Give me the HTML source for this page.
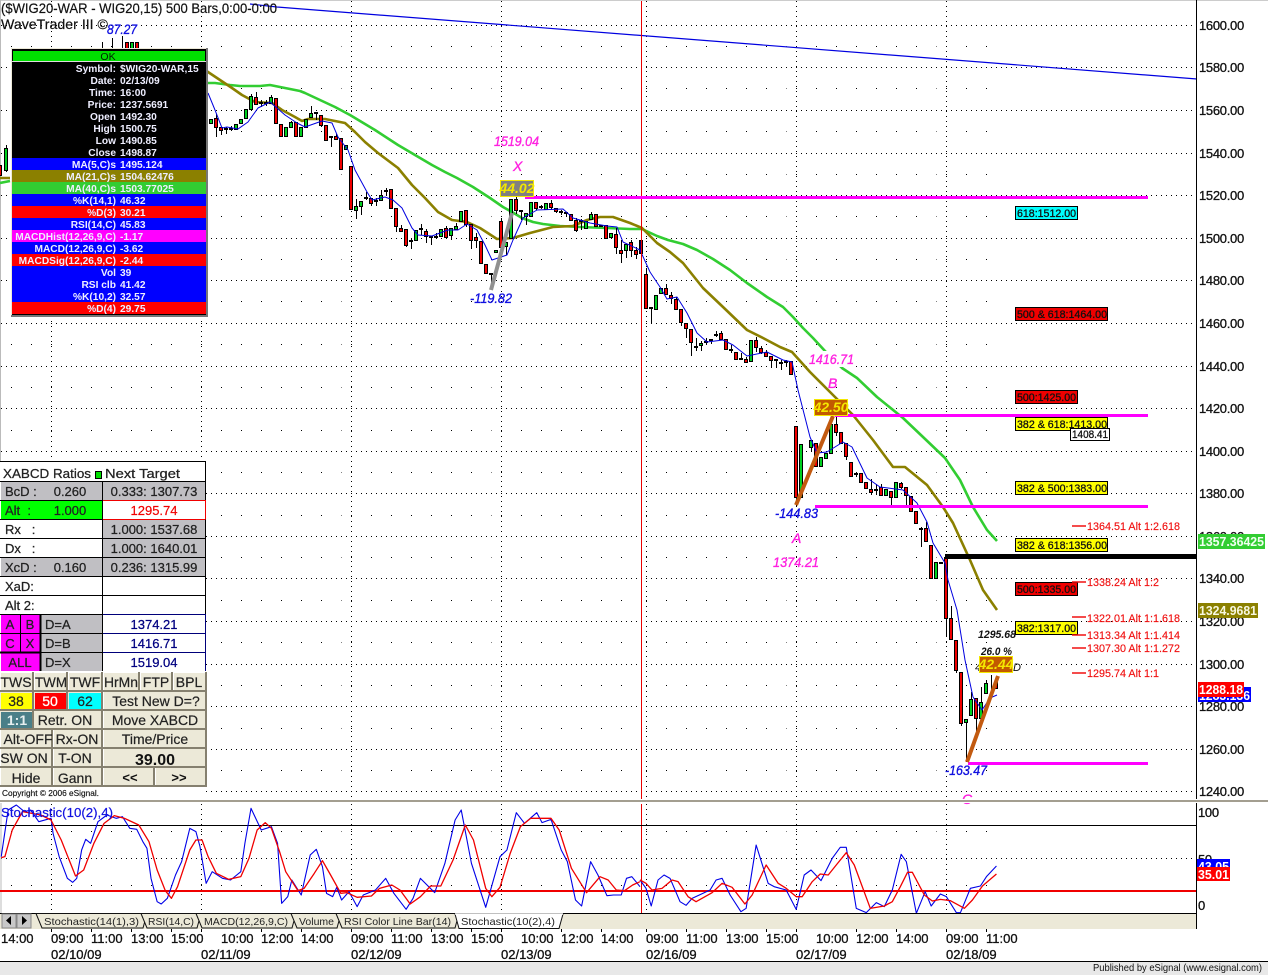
<!DOCTYPE html>
<html><head><meta charset="utf-8"><title>WIG20 WaveTrader chart</title>
<style>
html,body{margin:0;padding:0;background:#fff;width:1268px;height:975px;overflow:hidden}
svg{display:block;font-family:"Liberation Sans",sans-serif}
text{white-space:pre}
.ax{font-size:13px;letter-spacing:-.3px;fill:#111;stroke:#111;stroke-width:.3}
.tm{font-size:13px;fill:#111;stroke:#111;stroke-width:.3}
.dw{font-size:10.2px;font-weight:bold;fill:#eef}
.e{text-anchor:end}
.p{font-size:13px;fill:#222;stroke:#222;stroke-width:.25}
.b{font-size:14px;fill:#222;stroke:#222;stroke-width:.2;text-anchor:middle}
.c{text-anchor:middle}
.it{font-size:14px;font-style:italic;stroke-width:.35}
.mg{fill:#ff20e0;stroke:#ff20e0}
.bl{fill:#1010e0;stroke:#1010e0}
.box{font-size:11px;fill:#111;stroke:#111;stroke-width:.3}
.alt{font-size:11px;fill:#f01010;stroke:#f01010;stroke-width:.15}
.tab{font-size:10.5px;fill:#222}
</style></head><body>
<svg width="1268" height="975" viewBox="0 0 1268 975" xmlns="http://www.w3.org/2000/svg">
<defs><path id="sp" d="M11 0H191M201 0H341.5M351 0H491.5M501 0H641.5M646 0H786.5M796 0H936.5M946 0H994"/></defs>
<rect width="1268" height="975" fill="#fff"/>
<rect y="0" width="1268" height="1" fill="#ccc"/>
<rect x="0" y="0" width="1" height="800" fill="#bbb"/>

<!-- grid -->
<g stroke="#000" stroke-width="1" fill="none" shape-rendering="crispEdges" stroke-dasharray="1 4">
<path d="M1 25.5H1196M1 67.5H1196M1 110.5H1196M1 153.5H1196M1 195.5H1196M1 238.5H1196M1 280.5H1196M1 323.5H1196M1 366.5H1196M1 408.5H1196M1 451.5H1196M1 493.5H1196M1 536.5H1196M1 578.5H1196M1 621.5H1196M1 664.5H1196M1 706.5H1196M1 749.5H1196M1 791.5H1196M1 858.5H1196"/>
<path d="M51.5 1V800M201.5 1V800M351.5 1V800M501.5 1V800M646.5 1V800M796.5 1V800M946.5 1V800M51.5 804V913M201.5 804V913M351.5 804V913M501.5 804V913M646.5 804V913M796.5 804V913M946.5 804V913"/>
</g>
<g stroke="#000" stroke-width="1" fill="none" shape-rendering="crispEdges" stroke-dasharray="1 19">
<use href="#sp" y="46.5"/><use href="#sp" y="88.5"/><use href="#sp" y="131.5"/><use href="#sp" y="174.5"/><use href="#sp" y="216.5"/><use href="#sp" y="259.5"/><use href="#sp" y="301.5"/><use href="#sp" y="344.5"/><use href="#sp" y="387.5"/><use href="#sp" y="430.5"/><use href="#sp" y="472.5"/><use href="#sp" y="515.5"/><use href="#sp" y="557.5"/><use href="#sp" y="600.5"/><use href="#sp" y="642.5"/><use href="#sp" y="685.5"/><use href="#sp" y="728.5"/><use href="#sp" y="770.5"/><use href="#sp" y="831.5"/><use href="#sp" y="885.5"/>
</g>

<!-- trend line -->
<path d="M250 4L277 7L1197 79" stroke="#0000e0" stroke-width="1.2" fill="none"/>

<!-- moving averages -->
<g fill="none" stroke-linejoin="round">
<path stroke="#32cd32" stroke-width="2.6" d="M208 83L215 83L230 85L240 86L260 86L270 85L285 88L300 91L305 93L320 100L335 107L350 115L375 130L398 145L415 155L432 165L445 172L457 178L473 187L490 198L503 207L512 212L522 218L533 222L543 224L560 226L580 227L607 228L630 229L642 229L657 236L668 240L683 244L697 250L713 259L730 270L747 283L767 297L783 307L793 317L803 328L813 338L825 351L842 368L857 378L877 397L903 418L923 437L945 458L960 480L973 507L987 530L997 541M0 183L10 181"/>
<path stroke="#8b8000" stroke-width="2.6" d="M205 70L220 80L232 88L242 95L255 102L272 103L282 110L295 117L302 121L308 119L325 119L335 121L345 123L355 132L365 142L378 153L398 168L412 185L425 198L438 212L452 220L467 222L480 228L497 239L513 238L530 233L553 227L573 226L587 220L600 217L613 217L630 223L642 228L657 243L670 252L683 263L703 288L723 307L747 330L763 338L780 347L792 352L810 372L830 392L853 415L873 440L893 467L905 467L927 485L943 507L953 523L970 560L983 590L997 610M0 178L10 178"/>
</g>

<!-- candles -->
<g stroke="#000" stroke-width="1" fill="none" shape-rendering="crispEdges">
<path d="M6.5 145V172M102.5 42V48M112.5 38V48M122.5 36V48M216.5 114V137M221.5 127V135M226.5 127V134M231.5 126V131M251.5 94V110M256.5 92V105M261.5 100V107M266.5 100V106M271.5 95V103M286.5 127V137M291.5 121V127M311.5 106V117M316.5 113V120M321.5 115V127M331.5 137V147M336.5 134V140M356.5 199V219M361.5 201V215M366.5 192V200M371.5 198V206M376.5 198V206M381.5 190V200M386.5 188V196M396.5 208V232M401.5 225V231M406.5 229V247M411.5 238V249M421.5 224V235M426.5 229V243M431.5 237V245M436.5 233V238M446.5 226V237M451.5 228V240M456.5 223V229M466.5 210V227M471.5 224V249M476.5 233V248M491.5 274V290M501.5 218V252M506.5 242V255M516.5 197V214M521.5 210V220M526.5 213V225M536.5 202V210M541.5 205V209M551.5 200V210M556.5 208V213M561.5 210V215M566.5 213V217M576.5 218V232M581.5 219V230M591.5 212V219M616.5 228V254M621.5 240V263M626.5 244V258M631.5 240V257M636.5 247V259M646.5 268V308M651.5 308V323M666.5 284V294M671.5 292V304M676.5 297V309M681.5 309V326M686.5 323V338M691.5 329V356M696.5 338V351M701.5 341V351M706.5 338V344M711.5 339V344M716.5 331V337M721.5 331V339M731.5 345V353M741.5 353V360M746.5 357V363M756.5 337V352M761.5 346V354M766.5 350V357M771.5 356V368M776.5 360V368M781.5 360V370M786.5 360V367M796.5 426V506M811.5 440V452M836.5 415V436M846.5 443V460M856.5 472V477M871.5 479V495M876.5 484V495M881.5 484V495M891.5 491V508M901.5 482V489M906.5 487V506M921.5 527V547M926.5 522V541M946.5 557V637M951.5 606V640M956.5 640V673M961.5 672V726M966.5 719V762M971.5 692V715M976.5 698V732M981.5 687V718M986.5 680V693M991.5 675V690M996.5 678V688"/>
<path stroke-width="2" d="M224 129h4M229 129h4M259 103h4M264 103h4M314 113h4M329 137h4M364 198h4M374 201h4M384 191h4M409 241h4M419 229h4M429 237h4M434 237h4M489 274h4M519 211h4M539 207h4M559 212h4M564 213h4M579 221h4M599 226h4M649 308h4M694 347h4M704 342h4M709 340h4M714 335h4M729 350h4M739 359h4M774 360h4M779 363h4M784 362h4M854 474h4M874 490h4M919 529h4M939 563h4"/>
<path fill="#00d020" d="M4.5 148.5h3v22h-3zM209.5 119.5h3v4h-3zM234.5 124.5h3v5h-3zM239.5 119.5h3v4h-3zM244.5 109.5h3v9h-3zM249.5 96.5h3v13h-3zM269.5 97.5h3v6h-3zM284.5 127.5h3v9h-3zM289.5 122.5h3v5h-3zM299.5 127.5h3v9h-3zM304.5 119.5h3v8h-3zM309.5 113.5h3v4h-3zM344.5 145.5h3v4h-3zM354.5 206.5h3v4h-3zM359.5 201.5h3v5h-3zM379.5 195.5h3v5h-3zM414.5 230.5h3v10h-3zM439.5 229.5h3v7h-3zM449.5 228.5h3v7h-3zM454.5 226.5h3v3h-3zM459.5 211.5h3v10h-3zM494.5 250.5h3v2h-3zM504.5 242.5h3v4h-3zM509.5 199.5h3v39h-3zM524.5 213.5h3v3h-3zM529.5 202.5h3v14h-3zM544.5 203.5h3v6h-3zM584.5 221.5h3v7h-3zM589.5 214.5h3v5h-3zM609.5 233.5h3v4h-3zM624.5 244.5h3v6h-3zM654.5 295.5h3v14h-3zM659.5 288.5h3v5h-3zM699.5 343.5h3v2h-3zM749.5 340.5h3v21h-3zM799.5 444.5h3v53h-3zM809.5 440.5h3v7h-3zM819.5 457.5h3v9h-3zM824.5 453.5h3v5h-3zM829.5 424.5h3v29h-3zM884.5 489.5h3v6h-3zM894.5 482.5h3v15h-3zM934.5 562.5h3v16h-3zM964.5 719.5h3v3h-3zM969.5 699.5h3v16h-3zM979.5 702.5h3v16h-3zM984.5 683.5h3v10h-3zM130.5 42.5h3v6h-3z"/>
<path fill="#f00000" d="M-1.5 165.5h3v10h-3zM125.5 42.5h3v6h-3zM135.5 42.5h3v6h-3zM214.5 118.5h3v9h-3zM219.5 127.5h3v3h-3zM254.5 97.5h3v7h-3zM274.5 98.5h3v25h-3zM279.5 124.5h3v12h-3zM294.5 122.5h3v14h-3zM319.5 115.5h3v10h-3zM324.5 125.5h3v15h-3zM334.5 136.5h3v3h-3zM339.5 138.5h3v31h-3zM349.5 166.5h3v43h-3zM369.5 198.5h3v5h-3zM389.5 189.5h3v19h-3zM394.5 208.5h3v18h-3zM399.5 228.5h3v3h-3zM404.5 229.5h3v16h-3zM424.5 231.5h3v5h-3zM444.5 228.5h3v9h-3zM464.5 210.5h3v14h-3zM469.5 224.5h3v16h-3zM474.5 237.5h3v3h-3zM479.5 241.5h3v22h-3zM484.5 264.5h3v9h-3zM499.5 221.5h3v26h-3zM514.5 199.5h3v11h-3zM534.5 202.5h3v6h-3zM549.5 203.5h3v4h-3zM554.5 208.5h3v3h-3zM569.5 214.5h3v6h-3zM574.5 220.5h3v10h-3zM594.5 214.5h3v12h-3zM604.5 225.5h3v13h-3zM614.5 234.5h3v13h-3zM619.5 250.5h3v3h-3zM629.5 242.5h3v8h-3zM634.5 250.5h3v4h-3zM644.5 274.5h3v34h-3zM664.5 288.5h3v6h-3zM669.5 295.5h3v3h-3zM674.5 299.5h3v10h-3zM679.5 309.5h3v13h-3zM684.5 323.5h3v5h-3zM689.5 329.5h3v13h-3zM719.5 333.5h3v6h-3zM724.5 339.5h3v10h-3zM734.5 352.5h3v7h-3zM744.5 359.5h3v3h-3zM754.5 340.5h3v7h-3zM759.5 348.5h3v4h-3zM764.5 352.5h3v4h-3zM769.5 356.5h3v4h-3zM789.5 361.5h3v13h-3zM794.5 426.5h3v71h-3zM814.5 443.5h3v23h-3zM834.5 424.5h3v8h-3zM839.5 432.5h3v11h-3zM844.5 443.5h3v13h-3zM849.5 462.5h3v14h-3zM859.5 473.5h3v9h-3zM864.5 482.5h3v6h-3zM869.5 489.5h3v3h-3zM879.5 487.5h3v8h-3zM889.5 491.5h3v6h-3zM899.5 483.5h3v4h-3zM904.5 487.5h3v8h-3zM909.5 496.5h3v15h-3zM914.5 511.5h3v12h-3zM924.5 528.5h3v13h-3zM929.5 545.5h3v33h-3zM944.5 557.5h3v61h-3zM949.5 618.5h3v21h-3zM954.5 640.5h3v30h-3zM959.5 672.5h3v51h-3zM974.5 698.5h3v20h-3zM994.5 682.5h3v6h-3z"/>
<path fill="#000060" d="M639.5 240.5h3v13h-3z"/>
</g>

<!-- MA5 blue -->
<path fill="none" stroke="#0000e0" stroke-width="1" stroke-linejoin="round" d="M208 93L215 110L222 128L227 127L238 129L248 122L258 108L270 102L277 108L285 115L297 123L305 127L322 121L332 123L338 137L348 150L355 170L367 192L372 200L385 197L393 200L402 208L412 228L418 235L432 236L448 230L458 230L467 224L477 230L485 245L492 260L507 255L513 240L523 218L537 210L563 209L573 218L590 223L607 226L617 227L623 242L640 250L650 272L660 287L667 299L677 297L687 313L697 333L707 342L723 340L733 345L747 356L767 352L783 360L792 362L798 390L810 437L817 453L827 452L843 442L852 447L867 478L880 487L903 490L917 503L927 522L933 543L945 563L948 580L957 610L965 660L973 697L982 710L990 698L997 695"/>

<!-- crosshair -->
<path d="M641.5 1V800M641.5 804V913" stroke="#e80000" stroke-width="1" fill="none" shape-rendering="crispEdges"/>

<!-- magenta lines -->
<g fill="#ff00ff" shape-rendering="crispEdges">
<rect x="525" y="196" width="623" height="3"/>
<rect x="835" y="414" width="313" height="3"/>
<rect x="815" y="505" width="333" height="3"/>
<rect x="968" y="762" width="180" height="3"/>
</g>
<rect x="945" y="554" width="252" height="5" fill="#000" shape-rendering="crispEdges"/>

<!-- pattern legs -->
<path d="M491 290L512 213" stroke="#909090" stroke-width="4" fill="none"/>
<path d="M796 505L833 416M967 762L998 676" stroke="#c25a10" stroke-width="4" fill="none"/>

<!-- chart labels -->
<rect x="808" y="351" width="48" height="16" fill="#fff"/>
<text class="it bl" x="107" y="34" textLength="30" lengthAdjust="spacingAndGlyphs">87.27</text>
<text class="it mg" x="494" y="146" textLength="45" lengthAdjust="spacingAndGlyphs">1519.04</text>
<text class="it mg" x="513" y="171">X</text>
<text class="it bl" x="470" y="303" textLength="42" lengthAdjust="spacingAndGlyphs">-119.82</text>
<text class="it mg" x="809" y="364" textLength="45" lengthAdjust="spacingAndGlyphs">1416.71</text>
<text class="it mg" x="828" y="388">B</text>
<text class="it bl" x="775" y="518" textLength="43" lengthAdjust="spacingAndGlyphs">-144.83</text>
<text class="it mg" x="792" y="543">A</text>
<text class="it mg" x="773" y="567" textLength="46" lengthAdjust="spacingAndGlyphs">1374.21</text>
<text x="978" y="638" fill="#111" style="font-size:11px;font-weight:bold;font-style:italic" textLength="38" lengthAdjust="spacingAndGlyphs">1295.68</text>
<text x="981" y="655" fill="#111" style="font-size:11px;font-weight:bold;font-style:italic" textLength="31" lengthAdjust="spacingAndGlyphs">26.0 %</text>
<text x="975" y="671" fill="#111" style="font-size:11px;font-style:italic">4</text>
<text x="1013" y="671" fill="#111" style="font-size:11px;font-style:italic">D</text>
<text class="it bl" x="945" y="775" textLength="42" lengthAdjust="spacingAndGlyphs">-163.47</text>
<text class="it mg" x="962" y="804">C</text>

<rect x="500.5" y="180.5" width="33" height="16" fill="#808080" stroke="#f4e800"/>
<text x="517" y="193" class="c" style="font-size:14px;font-weight:bold;font-style:italic" fill="#f4e800">44.02</text>
<rect x="814.5" y="399.5" width="33" height="16" fill="#c25a00" stroke="#f4e800"/>
<text x="831" y="412" class="c" style="font-size:14px;font-weight:bold;font-style:italic" fill="#f4e800">42.50</text>
<rect x="979.5" y="656.5" width="33" height="16" fill="#c25a00" stroke="#f4e800"/>
<text x="996" y="669" class="c" style="font-size:14px;font-weight:bold;font-style:italic" fill="#f4e800">42.44</text>

<!-- target boxes -->
<g stroke="#000" shape-rendering="crispEdges">
<rect x="1015.5" y="206.5" width="62" height="13" fill="#00ffff"/>
<rect x="1015.5" y="307.5" width="92" height="13" fill="#f00000"/>
<rect x="1015.5" y="390.5" width="62" height="13" fill="#f00000"/>
<rect x="1015.5" y="417.5" width="92" height="13" fill="#ffff00"/>
<rect x="1070.5" y="428.5" width="39" height="12" fill="#fff"/>
<rect x="1015.5" y="481.5" width="92" height="13" fill="#ffff00"/>
<rect x="1015.5" y="538.5" width="92" height="13" fill="#ffff00"/>
<rect x="1015.5" y="582.5" width="62" height="13" fill="#f00000"/>
<rect x="1015.5" y="621.5" width="62" height="13" fill="#ffff00"/>
</g>
<g class="box">
<text class="box" x="1017" y="217" textLength="59" lengthAdjust="spacingAndGlyphs">618:1512.00</text>
<text class="box" x="1017" y="318" textLength="90" lengthAdjust="spacingAndGlyphs">500 &amp; 618:1464.00</text>
<text class="box" x="1017" y="401" textLength="59" lengthAdjust="spacingAndGlyphs">500:1425.00</text>
<text class="box" x="1017" y="428" textLength="90" lengthAdjust="spacingAndGlyphs">382 &amp; 618:1413.00</text>
<text class="box" x="1072" y="438" textLength="36" lengthAdjust="spacingAndGlyphs">1408.41</text>
<text class="box" x="1017" y="492" textLength="90" lengthAdjust="spacingAndGlyphs">382 &amp; 500:1383.00</text>
<text class="box" x="1017" y="549" textLength="90" lengthAdjust="spacingAndGlyphs">382 &amp; 618:1356.00</text>
<text class="box" x="1017" y="593" textLength="59" lengthAdjust="spacingAndGlyphs">500:1335.00</text>
<text class="box" x="1017" y="632" textLength="59" lengthAdjust="spacingAndGlyphs">382:1317.00</text>
</g>

<!-- alt targets -->
<path d="M1072 526h14M1072 582h14M1072 617h14M1072 635h14M1072 648h14M1072 673h14" stroke="#f01010" stroke-width="1.5" fill="none"/>
<text class="alt" x="1087" y="530" textLength="93" lengthAdjust="spacingAndGlyphs">1364.51 Alt 1:2.618</text>
<text class="alt" x="1087" y="586" textLength="72" lengthAdjust="spacingAndGlyphs">1338.24 Alt 1:2</text>
<text class="alt" x="1087" y="622" textLength="93" lengthAdjust="spacingAndGlyphs">1322.01 Alt 1:1.618</text>
<text class="alt" x="1087" y="639" textLength="93" lengthAdjust="spacingAndGlyphs">1313.34 Alt 1:1.414</text>
<text class="alt" x="1087" y="652" textLength="93" lengthAdjust="spacingAndGlyphs">1307.30 Alt 1:1.272</text>
<text class="alt" x="1087" y="677" textLength="72" lengthAdjust="spacingAndGlyphs">1295.74 Alt 1:1</text>

<!-- title -->
<text x="1" y="13" fill="#111" font-size="14" stroke="#111" stroke-width=".2" textLength="276" lengthAdjust="spacingAndGlyphs">($WIG20-WAR - WIG20,15) 500 Bars,0:00-0:00</text>
<text x="1" y="29" fill="#111" font-size="14" stroke="#111" stroke-width=".2" textLength="107" lengthAdjust="spacingAndGlyphs">WaveTrader III ©</text>

<!-- data window -->
<rect x="11" y="48" width="197" height="268" fill="#ece9d8"/>
<path d="M207 48V316H11" stroke="#777" stroke-width="2" fill="none"/>
<rect x="12" y="49" width="194" height="266" fill="#000"/>
<rect x="13" y="51" width="192" height="10" fill="#00e000"/>
<rect x="12" y="61" width="194" height="1" fill="#ddd"/>
<rect x="12" y="158" width="194" height="12" fill="#0000ff"/>
<rect x="12" y="170" width="194" height="12" fill="#8b8000"/>
<rect x="12" y="182" width="194" height="12" fill="#32cd32"/>
<rect x="12" y="194" width="194" height="12" fill="#0000ff"/>
<rect x="12" y="206" width="194" height="12" fill="#ff0000"/>
<rect x="12" y="218" width="194" height="12" fill="#0000ff"/>
<rect x="12" y="230" width="194" height="12" fill="#ff00ff"/>
<rect x="12" y="242" width="194" height="12" fill="#0000ff"/>
<rect x="12" y="254" width="194" height="12" fill="#ff0000"/>
<rect x="12" y="266" width="194" height="36" fill="#0000ff"/>
<rect x="12" y="302" width="194" height="12" fill="#ff0000"/>
<text x="108" y="60" class="c" font-size="10.5" fill="#002200">OK</text>
<g class="dw">
<text class="dw e" x="116" y="72">Symbol:</text><text class="dw" x="120" y="72">$WIG20-WAR,15</text>
<text class="dw e" x="116" y="84">Date:</text><text class="dw" x="120" y="84">02/13/09</text>
<text class="dw e" x="116" y="96">Time:</text><text class="dw" x="120" y="96">16:00</text>
<text class="dw e" x="116" y="108">Price:</text><text class="dw" x="120" y="108">1237.5691</text>
<text class="dw e" x="116" y="120">Open</text><text class="dw" x="120" y="120">1492.30</text>
<text class="dw e" x="116" y="132">High</text><text class="dw" x="120" y="132">1500.75</text>
<text class="dw e" x="116" y="144">Low</text><text class="dw" x="120" y="144">1490.85</text>
<text class="dw e" x="116" y="156">Close</text><text class="dw" x="120" y="156">1498.87</text>
<text class="dw e" x="116" y="168">MA(5,C)s</text><text class="dw" x="120" y="168">1495.124</text>
<text class="dw e" x="116" y="180">MA(21,C)s</text><text class="dw" x="120" y="180">1504.62476</text>
<text class="dw e" x="116" y="192">MA(40,C)s</text><text class="dw" x="120" y="192">1503.77025</text>
<text class="dw e" x="116" y="204">%K(14,1)</text><text class="dw" x="120" y="204">46.32</text>
<text class="dw e" x="116" y="216">%D(3)</text><text class="dw" x="120" y="216">30.21</text>
<text class="dw e" x="116" y="228">RSI(14,C)</text><text class="dw" x="120" y="228">45.83</text>
<text class="dw e" x="116" y="240">MACDHist(12,26,9,C)</text><text class="dw" x="120" y="240">-1.17</text>
<text class="dw e" x="116" y="252">MACD(12,26,9,C)</text><text class="dw" x="120" y="252">-3.62</text>
<text class="dw e" x="116" y="264">MACDSig(12,26,9,C)</text><text class="dw" x="120" y="264">-2.44</text>
<text class="dw e" x="116" y="276">Vol</text><text class="dw" x="120" y="276">39</text>
<text class="dw e" x="116" y="288">RSI clb</text><text class="dw" x="120" y="288">41.42</text>
<text class="dw e" x="116" y="300">%K(10,2)</text><text class="dw" x="120" y="300">32.57</text>
<text class="dw e" x="116" y="312">%D(4)</text><text class="dw" x="120" y="312">29.75</text>
</g>

<!-- XABCD table -->
<rect x="0" y="461" width="206" height="339" fill="#fff"/>
<g shape-rendering="crispEdges">
<rect x="1" y="482" width="204" height="18" fill="#c0bfc3"/>
<rect x="1" y="501" width="101" height="18" fill="#00ff00"/>
<rect x="103" y="520" width="102" height="37" fill="#c0bfc3"/>
<rect x="1" y="558" width="204" height="18" fill="#c0bfc3"/>
<rect x="40" y="614" width="62" height="57" fill="#c0bfc3"/>
<rect x="1" y="614" width="39" height="57" fill="#ff00ff"/>
<path d="M0 461.5H205.5M0 481.5H205.5M0 500.5H205.5M0 519.5H205.5M0 538.5H205.5M0 557.5H205.5M0 576.5H205.5M0 595.5H205.5M0 614.5H103M0 633.5H103M0 652.5H103M102.5 481V671M205.5 461V500M205.5 519V614M40.5 614V671M20.5 614V652" stroke="#000" fill="none"/>
<path d="M40.5 614V671M0 652.5H41" stroke="#000" stroke-width="2" fill="none"/>
<path d="M103 614.5H205.5M103 633.5H205.5M103 652.5H205.5M205.5 614V671" stroke="#00007a" fill="none"/>
<path d="M103 500.5H205.5M205.5 500V519M103 519.5H205.5" stroke="#f00000" fill="none"/>
<rect x="95.5" y="471.5" width="6" height="7" fill="#00e000" stroke="#000"/>
</g>
<text class="p" x="3" y="478" textLength="88" lengthAdjust="spacingAndGlyphs">XABCD Ratios</text>
<text class="p" x="105" y="478" textLength="75" lengthAdjust="spacingAndGlyphs">Next Target</text>
<text class="p" x="5" y="496">BcD :</text><text class="p c" x="70" y="496">0.260</text><text class="p c" x="154" y="496">0.333: 1307.73</text>
<text class="p" x="5" y="515">Alt  :</text><text class="p c" x="70" y="515">1.000</text><text x="154" y="515" font-size="13" fill="#f00000" stroke="#f00000" stroke-width=".2" style="text-anchor:middle">1295.74</text>
<text class="p" x="5" y="534">Rx   :</text><text class="p c" x="154" y="534">1.000: 1537.68</text>
<text class="p" x="5" y="553">Dx   :</text><text class="p c" x="154" y="553">1.000: 1640.01</text>
<text class="p" x="5" y="572">XcD :</text><text class="p c" x="70" y="572">0.160</text><text class="p c" x="154" y="572">0.236: 1315.99</text>
<text class="p" x="5" y="591">XaD:</text>
<text class="p" x="5" y="610">Alt 2:</text>
<text class="p c" x="10" y="629">A</text><text class="p c" x="30" y="629">B</text><text class="p" x="45" y="629">D=A</text>
<text class="p c" x="10" y="648">C</text><text class="p c" x="30" y="648">X</text><text class="p" x="45" y="648">D=B</text>
<text class="p c" x="20" y="667">ALL</text><text class="p" x="45" y="667">D=X</text>
<text x="154" y="629" font-size="13" fill="#000080" stroke="#000080" stroke-width=".25" style="text-anchor:middle">1374.21</text>
<text x="154" y="648" font-size="13" fill="#000080" stroke="#000080" stroke-width=".25" style="text-anchor:middle">1416.71</text>
<text x="154" y="667" font-size="13" fill="#000080" stroke="#000080" stroke-width=".25" style="text-anchor:middle">1519.04</text>

<!-- buttons -->
<g shape-rendering="crispEdges">
<rect x="0" y="672" width="207" height="114" fill="#ece9d8"/>
<rect x="1" y="693" width="32" height="16" fill="#ffff00"/>
<rect x="35" y="693" width="32" height="16" fill="#ff0000"/>
<rect x="69" y="693" width="33" height="16" fill="#00ffff"/>
<rect x="1" y="712" width="31" height="16" fill="#4a7f88"/>
<path fill="none" stroke="#fff" d="M0.5 690V672.5H33M34.5 690V672.5H67M68.5 690V672.5H102M103.5 690V672.5H139M140.5 690V672.5H172M173.5 690V672.5H206M103.5 709V691.5H206M33.5 728V710.5H102M103.5 728V710.5H206M0.5 747V729.5H52M53.5 747V729.5H102M103.5 747V729.5H206M0.5 766V748.5H52M53.5 766V748.5H102M103.5 766V748.5H206M0.5 785V767.5H52M53.5 785V767.5H102M103.5 785V767.5H154M155.5 785V767.5H206"/>
<path fill="none" stroke="#85806f" stroke-width="2" d="M33 672V691H0M67 672V691H34M102 672V691H68M139 672V691H103M172 672V691H140M206 672V691H173M206 691V710H103M102 710V729H33M206 710V729H103M52 729V748H0M102 729V748H53M206 729V748H103M52 748V767H0M102 748V767H53M206 748V767H103M52 767V786H0M102 767V786H53M154 767V786H103M206 767V786H155M33 691V710H0M67 691V710H34M102 691V710H68M33 710V729H0"/>
</g>
<text class="b" x="16" y="687">TWS</text><text class="b" x="51" y="687" textLength="32" lengthAdjust="spacingAndGlyphs">TWM</text><text class="b" x="85" y="687">TWF</text>
<text class="b" x="121" y="687" textLength="34" lengthAdjust="spacingAndGlyphs">HrMn</text><text class="b" x="156" y="687">FTP</text><text class="b" x="189" y="687">BPL</text>
<text class="b" x="16" y="706">38</text><text x="50" y="706" font-size="14" fill="#fff" stroke="#fff" stroke-width=".3" style="text-anchor:middle">50</text><text class="b" x="85" y="706">62</text>
<text class="b" x="156" y="706">Test New D=?</text>
<text x="17" y="725" font-size="14" font-weight="bold" fill="#e8f0f0" style="text-anchor:middle">1:1</text>
<text class="b" x="65" y="725">Retr. ON</text><text class="b" x="155" y="725">Move XABCD</text>
<text class="b" x="28" y="744">Alt-OFF</text><text class="b" x="77" y="744">Rx-ON</text><text class="b" x="155" y="744">Time/Price</text>
<text class="b" x="24" y="763">SW ON</text><text class="b" x="75" y="763">T-ON</text>
<text x="155" y="765" font-size="16" font-weight="bold" fill="#111" style="text-anchor:middle">39.00</text>
<text class="b" x="26" y="783">Hide</text><text class="b" x="75" y="783">Gann</text>
<text x="130" y="782" font-size="13" font-weight="bold" fill="#111" style="text-anchor:middle">&lt;&lt;</text>
<text x="179" y="782" font-size="13" font-weight="bold" fill="#111" style="text-anchor:middle">&gt;&gt;</text>
<text x="2" y="796" font-size="8.5" fill="#111" stroke="#111" stroke-width=".15" textLength="97" lengthAdjust="spacingAndGlyphs">Copyright © 2006 eSignal.</text>

<!-- right axis -->
<rect x="1196" y="0" width="1" height="929" fill="#000"/>
<g>
<text class="ax" x="1199" y="30">1600.00</text><text class="ax" x="1199" y="72">1580.00</text><text class="ax" x="1199" y="115">1560.00</text><text class="ax" x="1199" y="158">1540.00</text><text class="ax" x="1199" y="200">1520.00</text><text class="ax" x="1199" y="243">1500.00</text><text class="ax" x="1199" y="285">1480.00</text><text class="ax" x="1199" y="328">1460.00</text><text class="ax" x="1199" y="371">1440.00</text><text class="ax" x="1199" y="413">1420.00</text><text class="ax" x="1199" y="456">1400.00</text><text class="ax" x="1199" y="498">1380.00</text><text class="ax" x="1199" y="541">1360.00</text><text class="ax" x="1199" y="583">1340.00</text><text class="ax" x="1199" y="626">1320.00</text><text class="ax" x="1199" y="669">1300.00</text><text class="ax" x="1199" y="711">1280.00</text><text class="ax" x="1199" y="754">1260.00</text><text class="ax" x="1199" y="796">1240.00</text>
</g>
<rect x="1198" y="534" width="67" height="15" fill="#32cd32"/>
<text x="1199" y="546" font-size="12.5" font-weight="bold" fill="#f0fff0" textLength="65" lengthAdjust="spacingAndGlyphs">1357.36425</text>
<rect x="1198" y="603" width="60" height="15" fill="#8b8000"/>
<text x="1199" y="615" font-size="12.5" font-weight="bold" fill="#f8f8e0" textLength="58" lengthAdjust="spacingAndGlyphs">1324.9681</text>
<rect x="1198" y="687" width="53" height="15" fill="#0000ff"/>
<text x="1199" y="700" font-size="12.5" font-weight="bold" fill="#fff" textLength="51" lengthAdjust="spacingAndGlyphs">1283.136</text>
<rect x="1198" y="682" width="46" height="15" fill="#ff0000"/>
<text x="1199" y="694" font-size="12.5" font-weight="bold" fill="#fff" textLength="44" lengthAdjust="spacingAndGlyphs">1288.18</text>

<!-- pane divider -->
<rect x="0" y="799" width="1268" height="4" fill="#fff"/>
<rect x="0" y="800" width="1268" height="2" fill="#a39e90"/>
<path d="M1 803V913" stroke="#bbb" fill="none"/>

<!-- stochastic pane -->
<path d="M0 825.5H1196M0 890.5H1196" stroke="#000" fill="none" shape-rendering="crispEdges"/>
<rect x="0" y="890" width="1196" height="2" fill="#f00000"/>
<g fill="none" stroke-linejoin="round">
<g transform="translate(0,800) scale(.40816,.33333)">
<path vector-effect="non-scaling-stroke" stroke="#0000e8" stroke-width="1.1" d="M3 170L20 30L40 15L60 35L75 30L95 65L125 55L130 100L145 170L165 235L178 247L188 235L200 150L210 118L222 130L240 65L262 45L285 55L300 50L318 85L335 88L350 125L360 145L370 235L385 305L395 312L410 295L430 225L445 185L465 85L480 95L490 140L505 250L520 215L545 235L565 240L590 215L600 130L615 25L640 90L665 80L680 130L690 310L705 290L715 240L738 285L760 165L775 148L790 200L800 280L815 290L825 262L837 300L855 275L875 320L890 285L920 270L945 235L965 280L995 328L1012 295L1030 235L1065 278L1090 190L1115 60L1130 30L1155 190L1190 322L1225 170L1242 150L1265 38L1285 70L1315 38L1328 68L1350 58L1375 150L1390 185L1410 300L1425 318L1447 185L1465 225L1487 287L1503 285L1522 285L1535 235L1548 230L1568 260"/>
<path vector-effect="non-scaling-stroke" stroke="#f00000" stroke-width="1.3" d="M3 173L12 170L30 90L55 35L100 45L125 60L150 120L185 228L205 210L230 130L255 70L280 47L305 55L340 75L365 125L385 210L405 272L420 295L435 260L465 150L480 120L495 120L510 170L530 220L560 238L590 230L610 175L630 90L650 68L665 85L685 155L700 215L730 272L745 265L770 220L790 182L810 225L835 280L850 278L875 292L910 288L930 265L960 255L980 270L1005 312L1030 290L1055 258L1080 258L1110 180L1140 75L1160 120L1190 265L1205 290L1225 262L1250 160L1275 80L1300 55L1350 55L1370 90L1400 205L1437 278L1470 230L1490 240L1510 270L1530 272L1550 255L1568 245"/>
</g>
<g transform="translate(640,800) scale(.4005,.33333)">
<path vector-effect="non-scaling-stroke" stroke="#0000e8" stroke-width="1.1" d="M0 240L15 265L28 318L45 240L60 225L75 235L100 305L115 316L130 295L175 270L190 240L205 235L225 285L252 335L265 325L290 135L320 250L335 260L365 270L390 328L410 225L427 210L452 242L480 175L500 142L515 142L540 325L565 338L590 308L610 320L630 270L652 163L665 185L690 340L712 275L727 318L750 282L765 290L790 338L800 338L825 265L850 258L865 230L890 198"/>
<path vector-effect="non-scaling-stroke" stroke="#f00000" stroke-width="1.3" d="M0 240L15 250L30 270L55 265L80 240L95 245L120 290L140 305L180 278L205 250L230 262L262 312L280 285L315 195L345 250L365 265L390 290L405 290L430 245L450 222L470 225L490 195L515 158L535 195L575 325L610 318L630 305L650 260L668 217L680 217L710 285L730 303L750 298L775 302L810 325L830 300L855 258L890 222"/>
</g>
</g>
<text x="1" y="817" font-size="13" fill="#1010e0" stroke="#1010e0" stroke-width=".2" textLength="112" lengthAdjust="spacingAndGlyphs">Stochastic(10(2),4)</text>
<text class="ax" x="1198" y="817">100</text>
<text class="ax" x="1198" y="864">50</text>
<text class="ax" x="1198" y="910">0</text>
<rect x="1197" y="859" width="33" height="10" fill="#0000ff"/>
<text x="1198" y="871" font-size="12.5" font-weight="bold" fill="#fff" textLength="31" lengthAdjust="spacingAndGlyphs">43.05</text>
<rect x="1197" y="867" width="33" height="14" fill="#ff0000"/>
<text x="1198" y="879" font-size="12.5" font-weight="bold" fill="#fff" textLength="31" lengthAdjust="spacingAndGlyphs">35.01</text>

<!-- tab strip -->
<rect x="0" y="913" width="1196" height="16" fill="#ece9d8"/>
<rect x="0" y="913" width="1197" height="1" fill="#000"/>
<rect x="2" y="914" width="14" height="14" fill="#c8c8c8" stroke="#888" shape-rendering="crispEdges"/>
<rect x="17" y="914" width="14" height="14" fill="#c8c8c8" stroke="#888" shape-rendering="crispEdges"/>
<path d="M11 916v9l-5-4.500zM22 916v9l5-4.500z" fill="#000"/>
<g stroke="#111" fill="#ece9d8" stroke-width="1">
<path d="M36 913.500L42 928H143L147 913.500z"/>
<path d="M141 913.500L147 928H197L201 913.500z"/>
<path d="M196 913.500L202 928H292L296 913.500z"/>
<path d="M291 913.500L297 928H337L341 913.500z"/>
<path d="M336 913.500L342 928H455L459 913.500z"/>
</g>
<path d="M455 914L459 928.500H559L563 914z" fill="#fff" stroke="#111"/>
<path d="M455 914H563" stroke="#fff" stroke-width="1.5"/>
<text class="tab" x="44" y="925" textLength="95" lengthAdjust="spacingAndGlyphs">Stochastic(14(1),3)</text>
<text class="tab" x="148" y="925" textLength="46" lengthAdjust="spacingAndGlyphs">RSI(14,C)</text>
<text class="tab" x="204" y="925" textLength="84" lengthAdjust="spacingAndGlyphs">MACD(12,26,9,C)</text>
<text class="tab" x="299" y="925" textLength="35" lengthAdjust="spacingAndGlyphs">Volume</text>
<text class="tab" x="344" y="925" textLength="107" lengthAdjust="spacingAndGlyphs">RSI Color Line Bar(14)</text>
<text class="tab" x="461" y="925" textLength="94" lengthAdjust="spacingAndGlyphs">Stochastic(10(2),4)</text>

<!-- time axis -->
<path d="M51.500 929v3M91.500 929v3M131.500 929v3M171.500 929v3M201.500 929v3M261.500 929v3M301.500 929v3M351.500 929v3M391.500 929v3M431.500 929v3M471.500 929v3M501.500 929v3M561.500 929v3M601.500 929v3M646.500 929v3M686.500 929v3M726.500 929v3M766.500 929v3M796.500 929v3M856.500 929v3M896.500 929v3M946.500 929v3M986.500 929v3" stroke="#000" fill="none" shape-rendering="crispEdges"/>
<g>
<text class="tm" x="1" y="943">14:00</text><text class="tm" x="51" y="943">09:00</text><text class="tm" x="91" y="943">11:00</text><text class="tm" x="131" y="943">13:00</text><text class="tm" x="171" y="943">15:00</text><text class="tm" x="221" y="943">10:00</text><text class="tm" x="261" y="943">12:00</text><text class="tm" x="301" y="943">14:00</text><text class="tm" x="351" y="943">09:00</text><text class="tm" x="391" y="943">11:00</text><text class="tm" x="431" y="943">13:00</text><text class="tm" x="471" y="943">15:00</text><text class="tm" x="521" y="943">10:00</text><text class="tm" x="561" y="943">12:00</text><text class="tm" x="601" y="943">14:00</text><text class="tm" x="646" y="943">09:00</text><text class="tm" x="686" y="943">11:00</text><text class="tm" x="726" y="943">13:00</text><text class="tm" x="766" y="943">15:00</text><text class="tm" x="816" y="943">10:00</text><text class="tm" x="856" y="943">12:00</text><text class="tm" x="896" y="943">14:00</text><text class="tm" x="946" y="943">09:00</text><text class="tm" x="986" y="943">11:00</text>
<text class="tm" x="51" y="959">02/10/09</text><text class="tm" x="201" y="959">02/11/09</text><text class="tm" x="351" y="959">02/12/09</text><text class="tm" x="501" y="959">02/13/09</text><text class="tm" x="646" y="959">02/16/09</text><text class="tm" x="796" y="959">02/17/09</text><text class="tm" x="946" y="959">02/18/09</text>
</g>

<!-- status bar -->
<rect x="0" y="961" width="1268" height="1" fill="#000"/>
<rect x="0" y="962" width="1268" height="13" fill="#e8e8e8"/>
<text x="1093" y="971" font-size="10.500" fill="#111" textLength="169" lengthAdjust="spacingAndGlyphs">Published by eSignal (www.esignal.com)</text>
</svg>
</body></html>
